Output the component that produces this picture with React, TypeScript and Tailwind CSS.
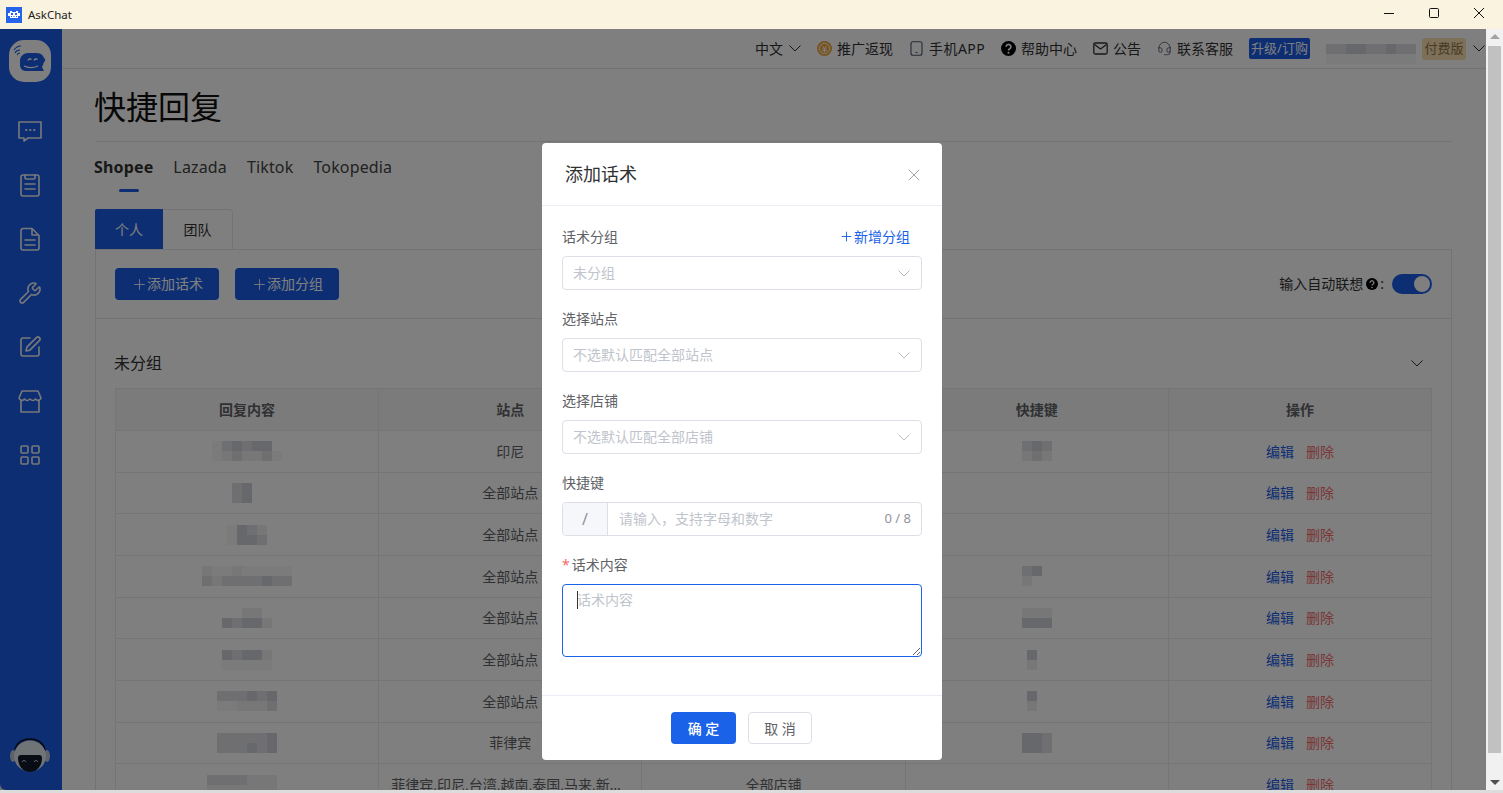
import { Plus, Wrench, SquarePen, LayoutGrid, X, Headset } from "lucide-react";

const shades: Record<string, string> = {
  ".": "bg-transparent",
  d: "bg-[#cfd0d6]",
  m: "bg-[#dfdfe2]",
  l: "bg-[#eeeeef]",
  x: "bg-[#f7f7f7]",
};

// blurred-out customer text, drawn as rows of tiles
function Mosaic({ rows }: { rows: string[] }) {
  return (
    <div className="flex flex-col">
      {rows.map((row, i) => (
        <div key={i} className="flex">
          {row.split("").map((c, j) => (
            <div key={j} className={`h-[10px] w-[10px] ${shades[c]}`} />
          ))}
        </div>
      ))}
    </div>
  );
}

function Chevron({ className }: { className?: string }) {
  return (
    <svg width="12" height="7" viewBox="0 0 12 7" fill="none" stroke="currentColor" strokeWidth="1" className={className}>
      <path d="M.5.5 6 6l5.500-5.500" />
    </svg>
  );
}

function HelpDot({ size }: { size: number }) {
  return (
    <svg width={size} height={size} viewBox="0 0 16 16">
      <circle cx="8" cy="8" r="8" fill="#000" />
      <path d="M5.500 6.200a2.500 2.500 0 1 1 3.800 2.100c-.9.5-1.300 1-1.300 1.800" fill="none" stroke="#fff" strokeWidth="1.800" />
      <circle cx="8" cy="12.600" r="1.100" fill="#fff" />
    </svg>
  );
}

const rows = [
  { tiles: ["xmdmdd.", "xlmllmx"], site: "印尼", key: ["mdm", "lml"] },
  { tiles: ["md.", "md."], site: "全部站点" },
  { tiles: ["xdml", "xddm"], site: "全部站点" },
  { tiles: ["lxxlxxxxx", "mlmmmmdmm"], site: "全部站点", key: ["md.", "l.."] },
  { tiles: ["..ll.", "dmddl"], site: "全部站点", key: ["lll", "ddd"] },
  { tiles: ["dmddl", "xxxxx"], site: "全部站点", key: ["d.", "l."] },
  { tiles: ["mmmdmd", "xxlllm"], site: "全部站点", key: ["d.", "l."] },
  { tiles: ["mmmmmd", "mmmdmd"], site: "菲律宾", key: ["ddm", "ddm"] },
  { tiles: ["mmmmlll.", "lllllll."], site: "菲律宾,印尼,台湾,越南,泰国,马来,新加坡,巴西", shop: "全部店铺" },
];

function TitleBar() {
  return (
    <div className="flex h-[29px] items-center justify-between bg-[#faf3df] pl-[6px] pr-[19px]">
      <div className="flex items-center gap-[6px]">
        <svg width="16" height="16" viewBox="0 0 16 16">
          <rect width="16" height="16" fill="#2563eb" />
          <path d="M4 4h2v1h4V4h2v2h2v3h-2v2H4V9H2V6h2z" fill="#fff" />
          <rect x="5" y="6" width="2" height="2" fill="#2563eb" />
          <rect x="9" y="6" width="2" height="2" fill="#2563eb" />
          <path d="M5 9h1v1H5zM7.500 9h1v1h-1zM10 9h1v1h-1z" fill="#2563eb" />
        </svg>
        <span className="text-[11.500px] text-[#222]">AskChat</span>
      </div>
      <div className="mb-[3px] flex items-center gap-[35px] text-[#111]">
        <svg width="10" height="10" viewBox="0 0 10 10" stroke="currentColor"><path d="M0 5.500h10" /></svg>
        <svg width="10" height="10" viewBox="0 0 10 10" stroke="currentColor" fill="none"><rect x=".5" y=".5" width="9" height="9" rx="1" /></svg>
        <svg width="10" height="10" viewBox="0 0 10 10" stroke="currentColor"><path d="M0 0l10 10M10 0 0 10" /></svg>
      </div>
    </div>
  );
}

function Logo() {
  return (
    <svg width="42" height="42" viewBox="0 0 42 42" className="mr-[2px]">
      <rect width="42" height="42" rx="15" fill="#fff" />
      <path d="M11 21c0-5 4-8 8-8h8c6 0 8 3 8 7 0 3-1 5-2 7l2 4H17c-4 0-6-3-6-6z" fill="#1a5ce6" />
      <path d="M19 20.500a2.200 2.200 0 0 1 3.500-1M25 20.500a2.200 2.200 0 0 1 3.500-1" stroke="#fff" strokeWidth="1.500" fill="none" />
      <path d="M15 26c4 2 9 2 14 0" stroke="#fff" strokeWidth="1.200" fill="none" />
      <circle cx="34" cy="20" r="2.200" fill="#1a5ce6" />
      <path d="M6 13c1-2 3-3 5-3M8 15c1-1 1-2 3-2M5 10c2-3 4-4 7-4" stroke="#1a5ce6" strokeWidth="1.100" fill="none" />
    </svg>
  );
}

function Avatar() {
  return (
    <svg width="40" height="34" viewBox="0 0 40 34">
      <path d="M5 12C7 4 13 1 20 1s13 3 15 11" stroke="#111" strokeWidth="1.500" fill="none" />
      <ellipse cx="3" cy="18" rx="3" ry="6" fill="#b9c6d6" />
      <ellipse cx="37" cy="18" rx="3" ry="6" fill="#b9c6d6" />
      <ellipse cx="20" cy="18" rx="16" ry="15.500" fill="#e2e8ee" />
      <path d="M11 17h18c2 0 3 1 3 3 0 8-5 14-12 14S8 28 8 20c0-2 1-3 3-3z" fill="#10182a" />
      <path d="M12 24c1-2 3-2 4 0M24 24c1-2 3-2 4 0" stroke="#e2e8ee" strokeWidth="1" fill="none" />
    </svg>
  );
}

function Sidebar() {
  const s = { fill: "none", stroke: "currentColor", strokeWidth: 1.6, strokeLinejoin: "round" as const, strokeLinecap: "round" as const };
  return (
    <div className="flex w-[62px] shrink-0 flex-col items-center rounded-bl-md bg-[#1a5ce6] pt-[11px] text-[#f0f2f6]">
      <Logo />
      <div className="mr-[2px] mt-[37px] flex flex-col items-center gap-[30px]">
        <svg width="24" height="24" viewBox="0 0 24 24" {...s}>
          <path d="M1 3h22v16H10l-4 3v-3H1z" />
          <path d="M8 11h.5M12 11h.5M16 11h.5" strokeWidth="1.800" />
        </svg>
        <svg width="24" height="24" viewBox="0 0 24 24" {...s}>
          <rect x="3" y="2" width="18" height="21" rx="2" />
          <path d="M7 2v3c0 1 1 1 1 1h8s1 0 1-1V2M7 11h10M7 16h10" />
        </svg>
        <svg width="24" height="24" viewBox="0 0 24 24" {...s}>
          <path d="M5 1.500h9l7 7V21a2 2 0 0 1-2 2H5a2 2 0 0 1-2-2V3.500a2 2 0 0 1 2-2z" />
          <path d="M14 2v6h6M7 13h10M7 18h10" />
        </svg>
        <Wrench size={24} strokeWidth={1.6} />
        <SquarePen size={24} strokeWidth={1.6} />
        <svg width="24" height="24" viewBox="0 0 24 24" {...s}>
          <path d="M4 2h16l3 7c-1 3-4 3-5.500 1-1.500 2-3.500 2-5.500 0-2 2-4 2-5.500 0C5 12 2 12 1 9zM3 11v12h18V11" />
        </svg>
        <LayoutGrid size={24} strokeWidth={1.6} />
      </div>
      <div className="mb-[18px] mr-[2px] mt-auto">
        <Avatar />
      </div>
    </div>
  );
}

function TopBar() {
  return (
    <div className="flex h-[40px] shrink-0 items-center justify-end gap-[16px] border-b border-[#e4e7ed] pr-[1px] text-[14px] text-[#303133]">
      <div className="flex items-center gap-[6px]">
        中文
        <Chevron />
      </div>
      <div className="flex items-center gap-[5px]">
        <svg width="15" height="15" viewBox="0 0 16 16">
          <circle cx="8" cy="8" r="8" fill="#f0a63c" />
          <circle cx="8" cy="8" r="5.500" fill="none" stroke="#fff" strokeWidth="1" />
          <path d="M5.500 5l2.500 3 2.500-3M5.500 8.500h5M5.500 10.500h5M8 8v4" stroke="#fff" strokeWidth="1" fill="none" />
        </svg>
        推广返现
      </div>
      <div className="flex items-center gap-[5px]">
        <svg width="15" height="15" viewBox="0 0 15 15" fill="none" stroke="#4a5568" strokeWidth="1.100">
          <rect x="2" y=".8" width="11" height="13.400" rx="2" />
          <path d="M6.500 11.500h2" />
        </svg>
        <span className="tracking-[0.4px]">手机APP</span>
      </div>
      <div className="flex items-center gap-[5px]">
        <HelpDot size={15} />
        帮助中心
      </div>
      <div className="flex items-center gap-[5px]">
        <svg width="15" height="15" viewBox="0 0 15 15" fill="none" stroke="currentColor" strokeWidth="1.300">
          <rect x=".8" y="2" width="13.400" height="11" rx="1.500" />
          <path d="M1.500 3.500 7.500 8l6-4.500" />
        </svg>
        公告
      </div>
      <div className="flex items-center gap-[5px]">
        <Headset size={15} strokeWidth={1.3} className="text-[#4a5568]" />
        联系客服
      </div>
      <div className="flex h-[21px] w-[61px] items-center justify-center rounded-[2px] bg-[#1a5ce6] text-[13px] text-white">升级/订购</div>
      <div className="flex items-center gap-[6px]">
        <Mosaic rows={[".........", "mmddmmdmm", "xxxxxxxxx"]} />
        <div className="flex h-[22px] w-[44px] items-center justify-center rounded-[3px] bg-[#f8e0b0] text-[13px] text-[#94744a]">付费版</div>
        <Chevron className="ml-[1px]" />
      </div>
    </div>
  );
}

function Table() {
  return (
    <div className="mx-[19px] mt-[13px] border-t border-l border-[#e8eaf2] text-[14px] text-[#606266]">
      <div className="grid h-[42px] grid-cols-5 items-stretch bg-[#f7f7f8] font-bold">
        {["回复内容", "站点", "适用店铺", "快捷键", "操作"].map((h) => (
          <div key={h} className="flex items-center justify-center border-r border-b border-[#e8eaf2]">
            {h}
          </div>
        ))}
      </div>
      {rows.map((row, i) => (
        <div key={i} className="grid h-[41.67px] grid-cols-5">
          <div className="flex items-center justify-center border-r border-b border-[#e8eaf2]">
            <Mosaic rows={row.tiles} />
          </div>
          <div className="flex min-w-0 items-center justify-center border-r border-b border-[#e8eaf2] px-[12px]">
            <span className="truncate">{row.site}</span>
          </div>
          <div className="flex items-center justify-center border-r border-b border-[#e8eaf2]">{row.shop ?? "全部店铺"}</div>
          <div className="flex items-center justify-center border-r border-b border-[#e8eaf2]">
            {row.key && <Mosaic rows={row.key} />}
          </div>
          <div className="flex items-center justify-center gap-[12px] border-r border-b border-[#e8eaf2]">
            <span className="text-[#1a5ce6]">编辑</span>
            <span className="text-[#f56c6c]">删除</span>
          </div>
        </div>
      ))}
    </div>
  );
}

function Main() {
  return (
    <div className="flex h-full min-w-0 flex-1 flex-col overflow-hidden bg-white">
      <TopBar />
      <div className="flex min-h-0 flex-1 flex-col pl-[33px] pr-[34px]">
        <div className="flex h-[73px] shrink-0 items-center border-b border-[#e8e8e8] pt-[4px] text-[32px] text-[#111]">
          <span className="ml-[-1px]">快捷回复</span>
        </div>
        <div className="mt-[7px] ml-[-1px] flex gap-[20px] text-[16px] tracking-[0.15px] text-[#444]">
          <div className="relative flex h-[36px] items-center font-bold text-[#303133]">
            Shopee
            <div className="absolute bottom-[-7px] left-[25px] h-[3px] w-[20px] rounded-full bg-[#1a5ce6]" />
          </div>
          <div className="flex h-[36px] items-center">Lazada</div>
          <div className="flex h-[36px] items-center">Tiktok</div>
          <div className="flex h-[36px] items-center">Tokopedia</div>
        </div>
        <div className="mt-[24px] flex text-[14px]">
          <div className="flex h-[40px] w-[68px] items-center justify-center rounded-tl-[2px] bg-[#1a5ce6] text-white">个人</div>
          <div className="flex h-[40px] w-[70px] items-center justify-center rounded-tr-[4px] border-t border-r border-[#e4e7ed] text-[#303133]">团队</div>
        </div>
        <div className="min-h-0 flex-1 border-t border-l border-r border-[#e4e7ed]">
          <div className="flex h-[69px] items-center justify-between border-b border-[#e4e7ed] pl-[19px] pr-[19px]">
            <div className="flex gap-[16px]">
              {["添加话术", "添加分组"].map((t) => (
                <div key={t} className="flex h-[32px] w-[104px] items-center justify-center rounded-[4px] bg-[#1a5ce6] text-[14px] text-white">
                  <Plus size={17} strokeWidth={1.2} className="mr-[-1px]" />
                  <span className="mb-[2px]">{t}</span>
                </div>
              ))}
            </div>
            <div className="flex items-center text-[14px] text-[#303133]">
              <span className="mb-[2px]">输入自动联想</span>
              <span className="ml-[3px]">
                <HelpDot size={12} />
              </span>
              <span className="mb-[2px] ml-[2px]">:</span>
              <div className="ml-[8px] flex h-[20px] w-[40px] items-center justify-end rounded-full bg-[#1a5ce6] pr-[2px]">
                <div className="h-[16px] w-[16px] rounded-full bg-white" />
              </div>
            </div>
          </div>
          <div className="mt-[32px] flex h-[24px] items-center justify-between pl-[18px] pr-[28px] text-[16px] text-[#303133]">
            未分组
            <Chevron />
          </div>
          <Table />
        </div>
      </div>
    </div>
  );
}

function Scrollbar() {
  return (
    <div className="flex w-[17px] shrink-0 flex-col items-center bg-[#f1f1f1] pt-[5px]">
      <div className="h-0 w-0 border-x-[5px] border-b-[5px] border-x-transparent border-b-[#a3a3a3]" />
      <div className="mt-[7px] h-[707px] w-[13px] bg-[#c1c1c1]" />
      <div className="mt-[27px] h-0 w-0 border-x-[5px] border-t-[5px] border-x-transparent border-t-[#505050]" />
    </div>
  );
}

function Field({ label, children, right, required }: { label: string; children: React.ReactNode; right?: React.ReactNode; required?: boolean }) {
  return (
    <div className="mb-[18px]">
      <div className="mb-[8px] flex h-[22px] items-center justify-between pb-[2px] text-[14px] text-[#606266]">
        <span>
          {required && <span className="mr-[2px] text-[#f56c6c]">*</span>}
          {label}
        </span>
        {right}
      </div>
      {children}
    </div>
  );
}

function SelectBox({ text }: { text: string }) {
  return (
    <div className="flex h-[34px] items-center justify-between rounded-[4px] border border-[#dcdfe6] pl-[10px] pr-[11px] text-[14px] text-[#c0c4cc]">
      <span className="mb-[2px]">{text}</span>
      <Chevron className="text-[#b8bcc4]" />
    </div>
  );
}

function Modal() {
  return (
    <div className="absolute left-[542px] top-[114px] flex h-[617px] w-[400px] flex-col rounded-[4px] bg-white">
      <div className="flex h-[63px] shrink-0 items-center justify-between border-b border-[#ebeef5] pl-[23px] pr-[18px]">
        <span className="text-[18px] text-[#303133]">添加话术</span>
        <X size={20} strokeWidth={1} className="mt-[1px] text-[#8a8f99]" />
      </div>
      <div className="flex-1 px-[20px] pt-[20px]">
        <Field
          label="话术分组"
          right={
            <span className="mr-[12px] flex items-center text-[#1a62e8]">
              <Plus size={15} strokeWidth={1.5} />
              新增分组
            </span>
          }
        >
          <SelectBox text="未分组" />
        </Field>
        <Field label="选择站点">
          <SelectBox text="不选默认匹配全部站点" />
        </Field>
        <Field label="选择店铺">
          <SelectBox text="不选默认匹配全部店铺" />
        </Field>
        <Field label="快捷键">
          <div className="flex h-[34px] items-center overflow-hidden rounded-[4px] border border-[#dcdfe6] text-[14px]">
            <div className="flex h-full w-[45px] items-center justify-center border-r border-[#dcdfe6] bg-[#f5f7fa] text-[16px] text-[#909399]">/</div>
            <input className="h-full min-w-0 flex-1 pb-[2px] pl-[11px] outline-none placeholder:text-[#c0c4cc]" placeholder="请输入，支持字母和数字" />
            <span className="pr-[10px] text-[13px] text-[#909399]">0 / 8</span>
          </div>
        </Field>
        <Field label="话术内容" required>
          <div className="relative">
            <textarea
              className="block h-[73px] w-full rounded-[4px] border border-[#1a62e8] px-[14px] py-[4px] text-[14px] caret-transparent outline-none placeholder:text-[#c0c4cc]"
              placeholder="话术内容"
            />
            <div className="absolute left-[15px] top-[7px] h-[18px] w-px bg-[#333]" />
          </div>
        </Field>
      </div>
      <div className="flex h-[65px] shrink-0 items-center justify-center gap-[12px] border-t border-[#ebeef5] pr-[1px] text-[14px]">
        <div className="flex h-[32px] w-[65px] items-center justify-center rounded-[4px] bg-[#1a62e8] font-medium text-white">确 定</div>
        <div className="flex h-[32px] w-[64px] items-center justify-center rounded-[4px] border border-[#dcdfe6] text-[#606266]">取 消</div>
      </div>
    </div>
  );
}

export default function App() {
  return (
    <div className="flex h-screen flex-col overflow-hidden bg-[#dcdcdc] font-['Noto_Sans','Noto_Sans_CJK_SC',sans-serif]">
      <TitleBar />
      <div className="relative flex h-[761px] shrink-0">
        <Sidebar />
        <Main />
        <div className="absolute inset-y-0 left-0 right-[17px] bg-black/50" />
        <Scrollbar />
        <Modal />
      </div>
    </div>
  );
}
